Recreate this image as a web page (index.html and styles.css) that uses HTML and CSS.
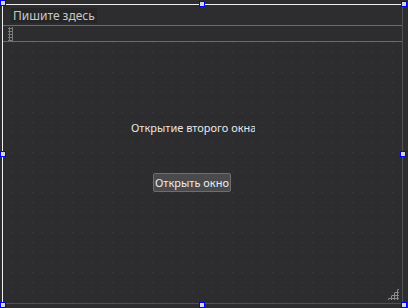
FILE: index.html
```
<!DOCTYPE html>
<html>
<head>
<meta charset="utf-8">
<link rel="stylesheet" href="styles.css">
</head>
<body>
<div class="stage">
  <div class="form">
    <div class="menubar"><span class="menu-placeholder">Пишите здесь</span></div>
    <div class="toolbar"><span class="grip"></span></div>
    <div class="central">
      <div class="label">Открытие второго окна</div>
      <div class="btn">Открыть окно</div>
      <div class="sizegrip"></div>
    </div>
  </div>
  <span class="handle h-tl"></span>
  <span class="handle h-tc"></span>
  <span class="handle h-tr"></span>
  <span class="handle h-ml"></span>
  <span class="handle h-mr"></span>
  <span class="handle h-bl"></span>
  <span class="handle h-bc"></span>
  <span class="handle h-br"></span>
</div>
</body>
</html>
```
FILE: styles.css
```
html, body {
  margin: 0;
  padding: 0;
  background: #2d2d2f;
  font-family: "Noto Sans", "Open Sans", sans-serif;
}
.stage {
  position: relative;
  width: 408px;
  height: 308px;
  padding: 4px 0 0 2px;
  box-sizing: border-box;
}
.form {
  width: 401px;
  height: 300px;
  box-sizing: border-box;
  border-top: 1px solid #f0f0f0;
  border-left: 1px solid #f0f0f0;
  border-right: 1px solid #505050;
  border-bottom: 1px solid #505050;
  display: flex;
  flex-direction: column;
  background: #2d2d2f;
}
.menubar {
  height: 20px;
  border-bottom: 1px solid #6a6a6a;
  display: flex;
  align-items: center;
  padding-left: 8px;
}
.menu-placeholder {
  font-size: 12px;
  color: #c8c8c8;
  background: #262628;
  padding: 0 2px;
  line-height: 15px;
}
.toolbar {
  height: 15px;
  border-bottom: 1px solid #6a6a6a;
  display: flex;
  align-items: center;
  padding-left: 5px;
}
.grip {
  width: 5px;
  height: 14px;
  background-image: radial-gradient(circle, #7a7a7a 1px, transparent 1.2px);
  background-size: 3px 3px;
}
.central {
  flex: 1;
  position: relative;
  background-image: radial-gradient(circle at 0.5px 0.5px, #404042 0.8px, transparent 1px);
  background-size: 10px 10px;
  background-position: -1px 0;
  display: flex;
  flex-direction: column;
  align-items: flex-start;
}
.label {
  margin: 79px 0 0 128px;
  width: 124px;
  overflow: hidden;
  white-space: nowrap;
  font-size: 11px;
  color: #e6e6e6;
  line-height: 14px;
}
.btn {
  margin: 38px 0 0 150px;
  width: 78px;
  height: 19px;
  box-sizing: border-box;
  border: 1px solid #6e6e6e;
  border-radius: 2px;
  background: #4a4a4c;
  color: #ececec;
  font-size: 11px;
  line-height: 17px;
  text-align: center;
  white-space: nowrap;
}
.sizegrip {
  position: absolute;
  right: 3px;
  bottom: 3px;
  width: 12px;
  height: 12px;
  background-image: radial-gradient(circle, #8a8a8a 1px, transparent 1.3px);
  background-size: 3px 3px;
  clip-path: polygon(100% 0, 100% 100%, 0 100%);
}
.handle {
  position: absolute;
  width: 4px;
  height: 4px;
  border: 1px solid #0000ff;
  background: #d4d4d4;
}
.h-tl { left: 0; top: 0; }
.h-tc { left: 199px; top: 1px; }
.h-tr { left: 401px; top: 1px; }
.h-ml { left: 0; top: 151px; }
.h-mr { left: 400px; top: 151px; }
.h-bl { left: 0; top: 302px; }
.h-bc { left: 199px; top: 302px; }
.h-br { left: 401px; top: 302px; }
```
